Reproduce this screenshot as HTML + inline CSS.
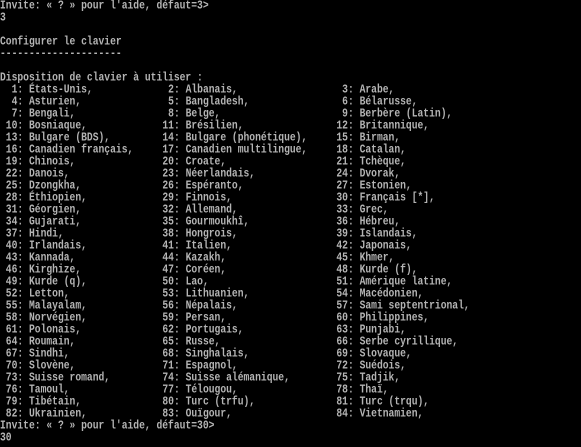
<!DOCTYPE html>
<html><head><meta charset="utf-8"><style>
html,body{margin:0;padding:0;background:#000;width:581px;height:447px;overflow:hidden}
#t{position:absolute;left:0;top:0;font-family:"Liberation Mono",monospace;font-size:9.67px;line-height:12px;color:#b4b4b4;font-weight:bold}
.l{position:relative;height:12px;white-space:pre;transform:scaleY(1.2);transform-origin:0 6px}
.l span{position:absolute;top:0;white-space:pre}
.a{left:0}.b{left:156.6px}.c{left:330.6px}
</style></head><body><div id="t">
<div class="l">Invite: « ? » pour l'aide, défaut=3&gt;</div>
<div class="l">3</div>
<div class="l"> </div>
<div class="l">Configurer le clavier</div>
<div class="l">---------------------</div>
<div class="l"> </div>
<div class="l">Disposition de clavier à utiliser :</div>
<div class="l"><span class="a">  1: États-Unis,</span><span class="b">  2: Albanais,</span><span class="c">  3: Arabe,</span></div>
<div class="l"><span class="a">  4: Asturien,</span><span class="b">  5: Bangladesh,</span><span class="c">  6: Bélarusse,</span></div>
<div class="l"><span class="a">  7: Bengali,</span><span class="b">  8: Belge,</span><span class="c">  9: Berbère (Latin),</span></div>
<div class="l"><span class="a"> 10: Bosniaque,</span><span class="b"> 11: Brésilien,</span><span class="c"> 12: Britannique,</span></div>
<div class="l"><span class="a"> 13: Bulgare (BDS),</span><span class="b"> 14: Bulgare (phonétique),</span><span class="c"> 15: Birman,</span></div>
<div class="l"><span class="a"> 16: Canadien français,</span><span class="b"> 17: Canadien multilingue,</span><span class="c"> 18: Catalan,</span></div>
<div class="l"><span class="a"> 19: Chinois,</span><span class="b"> 20: Croate,</span><span class="c"> 21: Tchèque,</span></div>
<div class="l"><span class="a"> 22: Danois,</span><span class="b"> 23: Néerlandais,</span><span class="c"> 24: Dvorak,</span></div>
<div class="l"><span class="a"> 25: Dzongkha,</span><span class="b"> 26: Espéranto,</span><span class="c"> 27: Estonien,</span></div>
<div class="l"><span class="a"> 28: Éthiopien,</span><span class="b"> 29: Finnois,</span><span class="c"> 30: Français [*],</span></div>
<div class="l"><span class="a"> 31: Géorgien,</span><span class="b"> 32: Allemand,</span><span class="c"> 33: Grec,</span></div>
<div class="l"><span class="a"> 34: Gujarati,</span><span class="b"> 35: Gourmoukhî,</span><span class="c"> 36: Hébreu,</span></div>
<div class="l"><span class="a"> 37: Hindi,</span><span class="b"> 38: Hongrois,</span><span class="c"> 39: Islandais,</span></div>
<div class="l"><span class="a"> 40: Irlandais,</span><span class="b"> 41: Italien,</span><span class="c"> 42: Japonais,</span></div>
<div class="l"><span class="a"> 43: Kannada,</span><span class="b"> 44: Kazakh,</span><span class="c"> 45: Khmer,</span></div>
<div class="l"><span class="a"> 46: Kirghize,</span><span class="b"> 47: Coréen,</span><span class="c"> 48: Kurde (f),</span></div>
<div class="l"><span class="a"> 49: Kurde (q),</span><span class="b"> 50: Lao,</span><span class="c"> 51: Amérique latine,</span></div>
<div class="l"><span class="a"> 52: Letton,</span><span class="b"> 53: Lithuanien,</span><span class="c"> 54: Macédonien,</span></div>
<div class="l"><span class="a"> 55: Malayalam,</span><span class="b"> 56: Népalais,</span><span class="c"> 57: Sami septentrional,</span></div>
<div class="l"><span class="a"> 58: Norvégien,</span><span class="b"> 59: Persan,</span><span class="c"> 60: Philippines,</span></div>
<div class="l"><span class="a"> 61: Polonais,</span><span class="b"> 62: Portugais,</span><span class="c"> 63: Punjabi,</span></div>
<div class="l"><span class="a"> 64: Roumain,</span><span class="b"> 65: Russe,</span><span class="c"> 66: Serbe cyrillique,</span></div>
<div class="l"><span class="a"> 67: Sindhi,</span><span class="b"> 68: Singhalais,</span><span class="c"> 69: Slovaque,</span></div>
<div class="l"><span class="a"> 70: Slovène,</span><span class="b"> 71: Espagnol,</span><span class="c"> 72: Suédois,</span></div>
<div class="l"><span class="a"> 73: Suisse romand,</span><span class="b"> 74: Suisse alémanique,</span><span class="c"> 75: Tadjik,</span></div>
<div class="l"><span class="a"> 76: Tamoul,</span><span class="b"> 77: Télougou,</span><span class="c"> 78: Thaï,</span></div>
<div class="l"><span class="a"> 79: Tibétain,</span><span class="b"> 80: Turc (trfu),</span><span class="c"> 81: Turc (trqu),</span></div>
<div class="l"><span class="a"> 82: Ukrainien,</span><span class="b"> 83: Ouïgour,</span><span class="c"> 84: Vietnamien,</span></div>
<div class="l">Invite: « ? » pour l'aide, défaut=30&gt;</div>
<div class="l">30</div>
</div></body></html>
